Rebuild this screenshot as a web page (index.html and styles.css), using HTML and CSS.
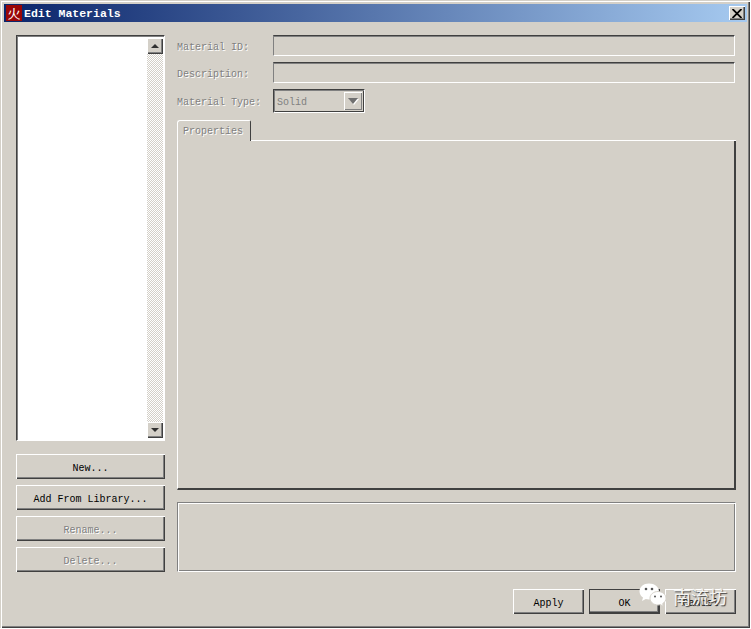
FILE: index.html
```html
<!DOCTYPE html>
<html lang="en">
<head>
<meta charset="utf-8">
<title>Edit Materials</title>
<link rel="stylesheet" href="styles.css">
</head>
<body>
<div class="window">
  <header class="titlebar">
    <span class="app-icon">火</span>
    <span class="title-text">Edit Materials</span>
    <button class="close-btn" aria-label="Close">
      <svg width="10" height="9" viewBox="0 0 10 9"><path d="M0.500 0 9.500 9M9.500 0 0.500 9" fill="none" stroke="#000" stroke-width="1.8"/></svg>
    </button>
  </header>
  <main class="content">
    <div class="columns">
      <section class="left">
        <div class="listbox">
          <div class="list-area"></div>
          <div class="scrollbar">
            <div class="scroll-btn"><span class="arrow-up"></span></div>
            <div class="scroll-track"></div>
            <div class="scroll-btn"><span class="arrow-down"></span></div>
          </div>
        </div>
        <div class="side-buttons">
          <button class="btn">New...</button>
          <button class="btn">Add From Library...</button>
          <button class="btn disabled">Rename...</button>
          <button class="btn disabled">Delete...</button>
        </div>
      </section>
      <section class="right">
        <div class="form-row"><label class="label">Material ID:</label><div class="field"></div></div>
        <div class="form-row"><label class="label">Description:</label><div class="field"></div></div>
        <div class="form-row combo-row">
          <label class="label">Material Type:</label>
          <div class="combo">
            <span class="combo-value">Solid</span>
            <div class="combo-btn"><span class="arrow-down grey"></span></div>
          </div>
        </div>
        <div class="tabs"><div class="tab">Properties</div><div class="tab-rest"></div></div>
        <div class="tab-panel"></div>
        <div class="status-box"></div>
      </section>
    </div>
    <footer class="footer">
      <button class="btn foot-btn">Apply</button>
      <button class="btn foot-btn default">OK</button>
      <button class="btn foot-btn">Cancel</button>
    </footer>
  </main>
  <div class="watermark">
    <svg class="wechat" width="28" height="25" viewBox="0 0 28 25">
      <path d="M10 0.500C4.500 0.500 0.500 4 0.500 8.500 0.500 11 2 13.200 4 14.600L3 18 6.800 16C7.800 16.300 8.800 16.500 10 16.500 15.500 16.500 20 13 20 8.500 20 4 15.500 0.500 10 0.500Z" fill="#fff"/>
      <path d="M19 8.500C14.500 8.500 11 11.500 11 15.200 11 19 14.500 22 19 22 19.900 22 20.800 21.900 21.500 21.600L24.500 23.500 23.700 20.600C25.700 19.400 27 17.400 27 15.200 27 11.500 23.500 8.500 19 8.500Z" fill="#fff" stroke="#d4d0c8" stroke-width="1"/>
      <circle cx="7" cy="6" r="1.300" fill="#555"/><circle cx="13" cy="6" r="1.300" fill="#555"/>
      <circle cx="16" cy="13.500" r="1" fill="#555"/><circle cx="22" cy="13.500" r="1" fill="#555"/>
    </svg>
    <span class="wm-text">南流坊</span>
  </div>
</div>
</body>
</html>
```
FILE: styles.css
```css
* { box-sizing: border-box; }
html, body { margin: 0; padding: 0; background: #fff; }
body { width: 751px; height: 629px; overflow: hidden; font-family: "Liberation Mono", "DejaVu Sans Mono", monospace; font-size: 10px; color: #000; }

.window {
  position: relative;
  width: 750px;
  height: 628px;
  padding: 4px 3px 4px 4px;
  background: #d4d0c8;
  box-shadow: inset 1px 1px 0 #d4d0c8, inset 2px 2px 0 #fff, inset -1px -1px 0 #404040, inset -2px -2px 0 #808080;
}

.titlebar {
  display: flex;
  align-items: center;
  height: 18px;
  padding: 0 2px;
  background: linear-gradient(90deg, #0a246a, #a6caf0);
}
.app-icon {
  width: 16px;
  height: 16px;
  background: #9a0606;
  color: #fff;
  font: 13px/15px "Noto Sans CJK SC", sans-serif;
  text-align: center;
}
.title-text {
  flex: 1;
  margin-left: 2px;
  color: #fff;
  font-size: 11.5px;
  font-weight: bold;
}
.close-btn {
  display: flex;
  align-items: center;
  justify-content: center;
  width: 16px;
  height: 14px;
  padding: 0;
  border: 0;
  background: #d4d0c8;
  box-shadow: inset 1px 1px 0 #fff, inset -1px -1px 0 #404040, inset -2px -2px 0 #808080;
}

.content { padding: 13px 11px 0 12px; }
.columns { display: flex; gap: 12px; }
.left { width: 149px; }
.right { width: 559px; }

.listbox {
  display: flex;
  height: 406px;
  padding: 2px 1px 2px 2px;
  background: #fff;
  border: 1px solid;
  border-color: #404040 #fff #fff #404040;
  box-shadow: inset 1px 1px 0 #808080;
}
.list-area { flex: 1; }
.scrollbar { display: flex; flex-direction: column; width: 16px; }
.scroll-track {
  flex: 1;
  background: repeating-conic-gradient(#fff 0 25%, #d4d0c8 0 50%) 0 0 / 2px 2px;
}
.scroll-btn {
  display: flex;
  align-items: center;
  justify-content: center;
  height: 16px;
  background: #d4d0c8;
  box-shadow: inset 1px 1px 0 #fff, inset -1px -1px 0 #404040, inset -2px -2px 0 #808080;
}
.arrow-up { width: 0; height: 0; border: 4px solid transparent; border-top: 0; border-bottom: 4px solid #303030; }
.arrow-down { width: 0; height: 0; border: 4px solid transparent; border-bottom: 0; border-top: 4px solid #303030; }
.arrow-down.grey { border-width: 6px 5px 0; border-top-color: #707070; filter: drop-shadow(1px 1px 0 #fff); }

.side-buttons { display: flex; flex-direction: column; gap: 6px; margin-top: 13px; }
.btn {
  height: 25px;
  padding: 4px 0 0;
  border: 0;
  font: inherit;
  color: #000;
  background: #d4d0c8;
  box-shadow: inset 1px 1px 0 #fff, inset -1px -1px 0 #404040, inset -2px -2px 0 #808080;
}
.btn.disabled { color: #808080; text-shadow: 1px 1px 0 #fff; }

.form-row { display: flex; align-items: center; height: 21px; margin-bottom: 6px; }
.label { width: 96px; padding-top: 4px; color: #808080; text-shadow: 1px 1px 0 #fff; }
.field {
  width: 462px;
  height: 21px;
  border: 1px solid;
  border-color: #404040 #fff #fff #808080;
  box-shadow: inset 0 1px 0 #808080;
}
.combo-row { height: 24px; margin-bottom: 7px; }
.combo-row .label { padding-top: 2px; }
.combo {
  display: flex;
  align-items: center;
  justify-content: space-between;
  width: 92px;
  height: 24px;
  padding: 2px 2px 2px 3px;
  border: 1px solid;
  border-color: #404040 #fff #fff #404040;
  box-shadow: inset 1px 1px 0 #808080, inset -1px -1px 0 #404040;
}
.combo-value { padding-top: 2px; color: #808080; }
.combo-btn {
  display: flex;
  align-items: center;
  justify-content: center;
  width: 18px;
  height: 18px;
  background: #d4d0c8;
  box-shadow: inset 1px 1px 0 #fff, inset -1px -1px 0 #808080;
}

.tabs { display: flex; height: 21px; }
.tab {
  width: 74px;
  padding: 5px 0 0 5px;
  border: 1px solid;
  border-color: #fff #404040 transparent #fff;
  border-bottom: 0;
  border-top-left-radius: 3px;
  border-top-right-radius: 2px;
  color: #808080;
  text-shadow: 1px 1px 0 #fff;
}
.tab-rest { flex: 1; border-bottom: 1px solid #fff; }
.tab-panel {
  height: 349px;
  border-left: 1px solid #fff;
  border-right: 2px solid #404040;
  border-bottom: 2px solid #404040;
}
.status-box {
  height: 70px;
  margin-top: 12px;
  border: 1px solid;
  border-color: #808080 #fff #fff #808080;
  box-shadow: inset 1px 1px 0 #fff, inset -1px -1px 0 #808080;
}

.footer { display: flex; justify-content: flex-end; gap: 5px; margin-top: 17px; }
.foot-btn { width: 71px; }
.default { box-shadow: inset 1px 1px 0 #fff, inset -1px -1px 0 #404040, inset -2px -2px 0 #404040, inset -3px -3px 0 #808080; outline: 1px solid #404040; outline-offset: -1px; }

.watermark {
  position: absolute;
  left: 639px;
  top: 583px;
  display: flex;
  align-items: center;
  gap: 6px;
}
.wm-text {
  color: #f4f4f2;
  font: 18px/24px "Noto Sans CJK SC", sans-serif;
  text-shadow: 1px 1px 1px #444;
}
```
